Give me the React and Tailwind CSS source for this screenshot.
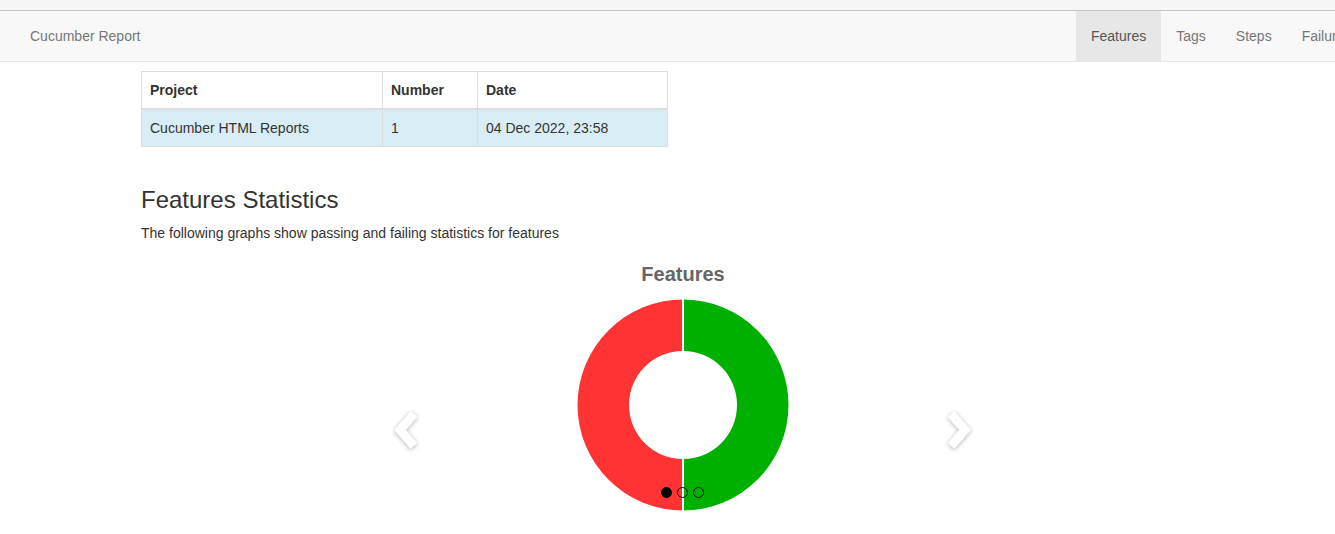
import React from 'react'

// ─── Donut geometry ──────────────────────────────────────────────────────────
const R = 105.5
const r = 54
const C = 106

const leftHalf  = `M ${C} ${C - R} A ${R} ${R} 0 0 0 ${C} ${C + R} L ${C} ${C + r} A ${r} ${r} 0 0 1 ${C} ${C - r} Z`
const rightHalf = `M ${C} ${C - R} A ${R} ${R} 0 0 1 ${C} ${C + R} L ${C} ${C + r} A ${r} ${r} 0 0 0 ${C} ${C - r} Z`

const NAV = ['Features', 'Tags', 'Steps', 'Failures']

export default function App() {
  return (
    <div className="min-h-[534px] bg-white font-['Liberation_Sans',Arial,sans-serif] text-[14px] text-[#333] overflow-hidden">
      {/* ── Top strip ── */}
      <div className="h-[10px] bg-[#f7f7f7]" />

      {/* ── Navbar ── */}
      <div className="flex h-[52px] border-t border-b border-t-[#c4c4c4] border-b-[#e7e7e7] bg-[#f8f8f8] overflow-hidden whitespace-nowrap">
        <div className="w-[1076px] shrink-0 flex items-center pl-[30px] text-[#777]">Cucumber Report</div>
        {NAV.map((item, i) => (
          <div
            key={item}
            className={i === 0
              ? 'shrink-0 flex items-center px-[15px] bg-[#e7e7e7] text-[#555]'
              : 'shrink-0 flex items-center px-[15px] text-[#777]'}
          >
            {item}
          </div>
        ))}
      </div>

      {/* ── Content ── */}
      <div className="pl-[141px] pt-[9px] w-[1225px]">
        <table className="w-[527px] border-collapse border border-[#ddd]">
          <thead>
            <tr className="text-left">
              <th className="w-[241px] px-[8px] py-[8px] leading-[20px] border border-[#ddd] border-b-2 font-bold">Project</th>
              <th className="w-[95px] px-[8px] py-[8px] leading-[20px] border border-[#ddd] border-b-2 font-bold">Number</th>
              <th className="px-[8px] py-[8px] leading-[20px] border border-[#ddd] border-b-2 font-bold">Date</th>
            </tr>
          </thead>
          <tbody>
            <tr className="bg-[#d9edf7]">
              <td className="px-[8px] py-[8px] leading-[20px] border border-[#ddd]">Cucumber HTML Reports</td>
              <td className="px-[8px] py-[8px] leading-[20px] border border-[#ddd]">1</td>
              <td className="px-[8px] py-[8px] leading-[20px] border border-[#ddd]">04 Dec 2022, 23:58</td>
            </tr>
          </tbody>
        </table>

        <h2 className="mt-[40px] mb-[10px] text-[24px] leading-[26px] font-normal">Features Statistics</h2>
        <p className="leading-[20px]">The following graphs show passing and failing statistics for features</p>

        {/* ── Chart carousel ── */}
        <div className="relative mt-[19px] w-[1084px] h-[272px]">
          <div className="flex flex-col items-center">
            <p className="text-[20px] leading-[24px] font-bold text-[#666]">Features</p>
            <svg width="212" height="212" viewBox="0 0 212 212" className="mt-[13px]">
              <path d={leftHalf} fill="#ff3333" />
              <path d={rightHalf} fill="#00b000" />
              <line x1={C} y1={C - R - 1} x2={C} y2={C - r + 1} stroke="#fff" strokeWidth="2" />
              <line x1={C} y1={C + r - 1} x2={C} y2={C + R + 1} stroke="#fff" strokeWidth="2" />
            </svg>
          </div>

          {/* carousel controls */}
          <svg width="34" height="46" viewBox="0 0 34 46" className="absolute left-[249px] top-[145px] drop-shadow-[0_1px_2px_rgba(0,0,0,0.3)]">
            <polyline points="24,7 10,23 24,39" fill="none" stroke="#fff" strokeWidth="9" strokeLinejoin="miter" />
          </svg>
          <svg width="34" height="46" viewBox="0 0 34 46" className="absolute left-[800px] top-[145px] drop-shadow-[0_1px_2px_rgba(0,0,0,0.3)]">
            <polyline points="10,7 24,23 10,39" fill="none" stroke="#fff" strokeWidth="9" strokeLinejoin="miter" />
          </svg>

          {/* carousel indicators */}
          <div className="absolute left-[520px] top-[225px] flex items-center gap-[5px]">
            <span className="w-[11px] h-[11px] rounded-full bg-black border border-black" />
            <span className="w-[11px] h-[11px] rounded-full border border-black" />
            <span className="w-[11px] h-[11px] rounded-full border border-black" />
          </div>
        </div>
      </div>
    </div>
  )
}
